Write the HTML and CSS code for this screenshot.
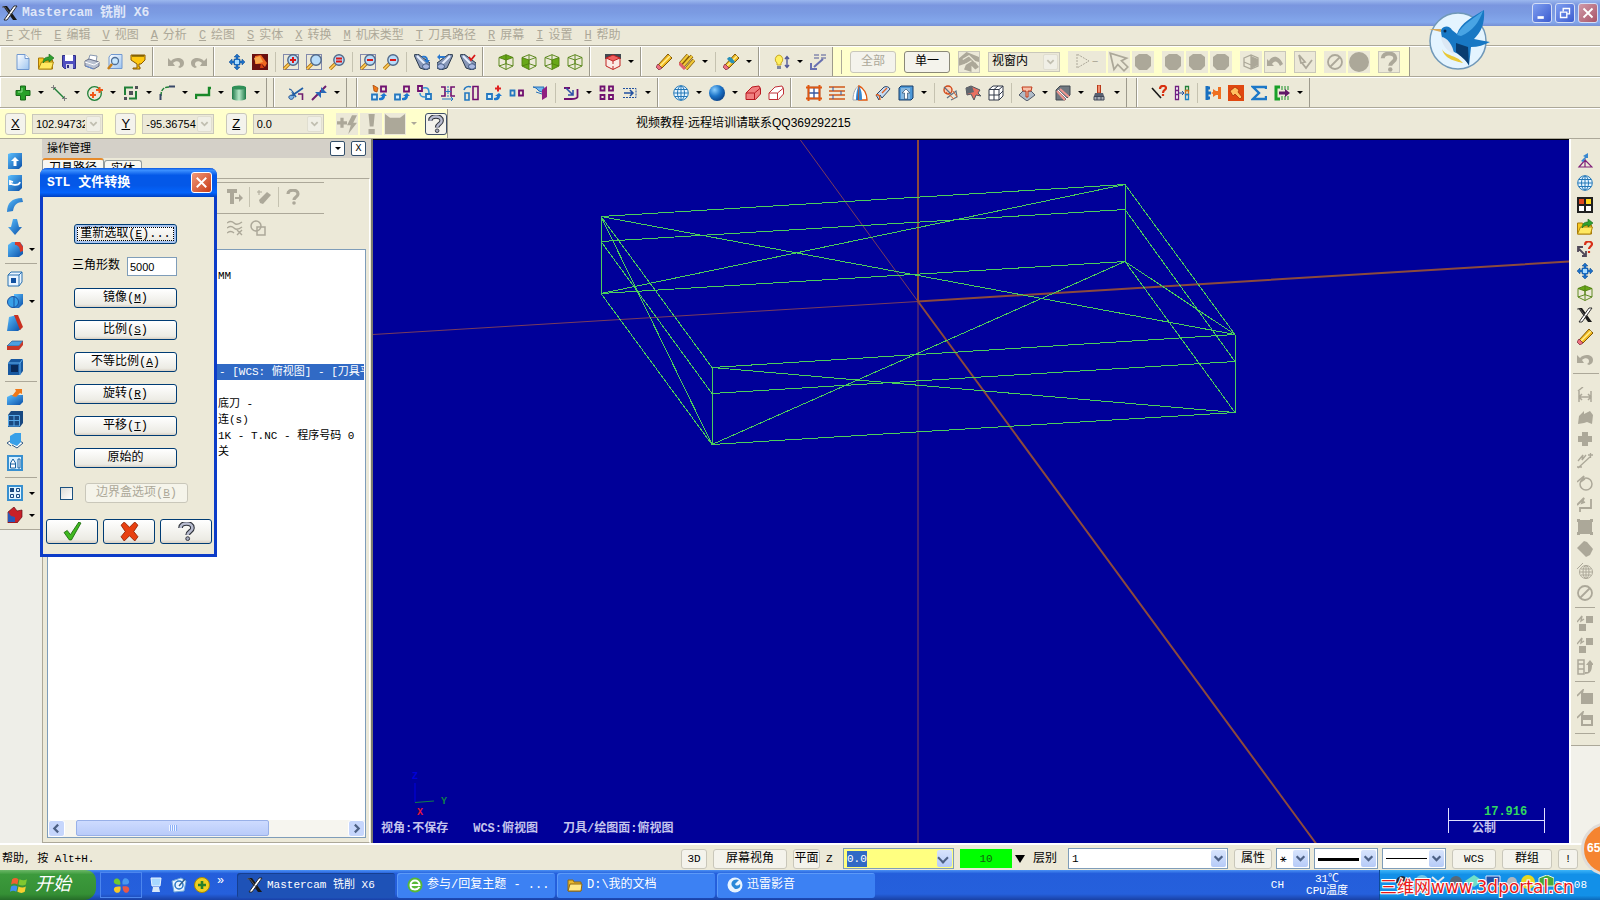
FILE: index.html
```html
<!DOCTYPE html>
<html lang="zh-CN">
<head>
  <meta charset="utf-8">
  <title>Mastercam 铣削 X6</title>
  <link rel="stylesheet" href="styles.css">
</head>
<body>

<!-- icon sheet -->
<svg class="sheet" width="0" height="0">
  <defs>
    <linearGradient id="gb" x1="0" y1="0" x2="1" y2="1"><stop offset="0" stop-color="#5cc0ff"/><stop offset="1" stop-color="#0a4fa8"/></linearGradient>
    <linearGradient id="gg" x1="0" y1="0" x2="1" y2="0"><stop offset="0" stop-color="#1e7a48"/><stop offset=".5" stop-color="#b6e8c8"/><stop offset="1" stop-color="#1e7a48"/></linearGradient>
    <linearGradient id="gp" x1="0" y1="0" x2="1" y2="1"><stop offset="0" stop-color="#ffffff"/><stop offset="1" stop-color="#9cc4f0"/></linearGradient>
    <radialGradient id="gs" cx=".35" cy=".3" r=".8"><stop offset="0" stop-color="#8cd0ff"/><stop offset=".5" stop-color="#1c74c8"/><stop offset="1" stop-color="#063a80"/></radialGradient>
  </defs>
  <symbol id="new" viewBox="0 0 16 16"><path d="M2 .5h8l4 4v11H2z" fill="url(#gp)" stroke="#7098d0"/><path d="M10 .5v4h4" fill="#fff" stroke="#7098d0"/></symbol>
  <symbol id="open" viewBox="0 0 16 16"><path d="M.5 15V4h5l1 2h8v9z" fill="#f8c820" stroke="#a87808"/><path d="M.5 15l3-7h12l-2 7z" fill="#ffe860" stroke="#b08810"/><path d="M5 9c0-4 2-6 6-6V0l5 4-5 4V6C8 6 7 7 5 9z" fill="#30a030" stroke="#186818" stroke-width=".6"/></symbol>
  <symbol id="save" viewBox="0 0 16 16"><path d="M1.500 1.500h13v13h-11l-2-2z" fill="#5050c0" stroke="#303088"/><path d="M4 1h8v6H4z" fill="#fff"/><path d="M5 10h7v5H5z" fill="#d8d8e8"/><path d="M6 11h2v3H6z" fill="#303080"/></symbol>
  <symbol id="print" viewBox="0 0 16 16"><path d="M4 7l2-6 7 1-1 6z" fill="#fff" stroke="#8898b0"/><path d="M1 7l4-2 10 3v4l-5 3-9-3z" fill="#b8c0d0" stroke="#68708a"/><path d="M1 8l9 3 5-3" fill="none" stroke="#fff"/><path d="M2 12l7 3" stroke="#6890d8"/></symbol>
  <symbol id="preview" viewBox="0 0 16 16"><path d="M4 .5h11v14H2V3z" fill="url(#gp)" stroke="#7098d0"/><circle cx="8" cy="7" r="3.500" fill="#c8e8ff" stroke="#507098" stroke-width="1.300"/><path d="M5 10l-4 5" stroke="#c88018" stroke-width="2.500"/></symbol>
  <symbol id="cup" viewBox="0 0 16 16"><path d="M1 1h14v5l-4 4H9v3h1v2H3v-1h4v-4L1 6z" fill="#ffc810" stroke="#8a5a00"/><path d="M3 1v2m2-2v2m2-2v2m2-2v2m2-2v2m2-2v2" stroke="#403000"/></symbol>
  <symbol id="undo" viewBox="0 0 16 16"><path d="M0 4v8h7L5 9c3-3 7-2 7 1 0 2-1 2-2 3l2 1c3-1 4-3 4-5 0-5-8-7-13-2z" fill="#aca899"/></symbol>
  <symbol id="redo" viewBox="0 0 16 16"><path d="M16 4v8H9l2-3C8 6 4 7 4 10c0 2 1 2 2 3l-2 1C1 13 0 11 0 9c0-5 8-7 13-2z" fill="#aca899"/></symbol>
  <symbol id="move" viewBox="0 0 16 16"><path d="M8 0l3 3H9v2h2v2h2V5l3 3-3 3V9h-2v2H9v2h2l-3 3-3-3h2v-2H5V9H3v2L0 8l3-3v2h2V5h2V3H5z" fill="#1c70c8" stroke="#104c90" stroke-width=".5"/><path d="M6 6h4v4H6z" fill="#a8dcff"/></symbol>
  <symbol id="paint" viewBox="0 0 16 16"><path d="M0 0h16v16H0z" fill="#6a1010"/><path d="M3 2l6-1 6 8-2 4-3-3-7 0z" fill="#f06820"/><path d="M2 4l6-2 3 6-7 2z" fill="#f8a850"/><path d="M9 9l3 5H8z" fill="#d84010"/></symbol>
  <symbol id="lens" viewBox="0 0 16 16"><path d="M1 15l5-5" stroke="#b87810" stroke-width="3.400"/><path d="M1 15l5-5" stroke="#ffd060" stroke-width="1.600"/><circle cx="10" cy="6" r="5.200" fill="#b8dcfa" stroke="#506888" stroke-width="1.400"/></symbol>
  <symbol id="zoomin" viewBox="0 0 16 16"><path d="M.5.5h15v15H.5z" fill="none" stroke="#182880" stroke-dasharray="1 1"/><use href="#lens"/><path d="M7 6h6M10 3v6" stroke="#d81818" stroke-width="2"/></symbol>
  <symbol id="zoomwin" viewBox="0 0 16 16"><path d="M.5.5h15v15H.5z" fill="none" stroke="#182880" stroke-dasharray="1 1"/><use href="#lens"/></symbol>
  <symbol id="zoomeq" viewBox="0 0 16 16"><use href="#lens"/><path d="M7 4.500h6M7 7.500h6" stroke="#d81818" stroke-width="1.800"/></symbol>
  <symbol id="zoomoutw" viewBox="0 0 16 16"><path d="M.5.5h15v15H.5z" fill="none" stroke="#182880" stroke-dasharray="1 1"/><use href="#lens"/><path d="M7 6h6" stroke="#d81818" stroke-width="2"/></symbol>
  <symbol id="zoomout" viewBox="0 0 16 16"><use href="#lens"/><path d="M7 6h6" stroke="#d81818" stroke-width="2"/></symbol>
  <symbol id="spy" viewBox="0 0 16 16"><path d="M0 1l4-1 12 9v5l-4 2-6-2z" fill="#8898b8" stroke="#28384c"/><path d="M3 2l9 9" stroke="#e8f0ff" stroke-width="2"/><ellipse cx="12" cy="12.500" rx="3.500" ry="2.800" fill="#a8b8e0" stroke="#405880"/></symbol>
  <symbol id="spy1" viewBox="0 0 16 16"><use href="#spy"/><path d="M8 2c4-1 6 1 6 4l2 0-3 3-3-3h2c0-2-2-3-4-2z" fill="#2878d0"/></symbol>
  <symbol id="spy2" viewBox="0 0 16 16"><use href="#spy" transform="matrix(-1 0 0 1 16 0)"/><path d="M0 3l3-3v2h5v2H3v2z" fill="#2878d0"/></symbol>
  <symbol id="spy3" viewBox="0 0 16 16"><use href="#spy"/><path d="M9 3l2 3 4-5" fill="none" stroke="#d81818" stroke-width="1.800"/></symbol>
  <symbol id="cube" viewBox="0 0 16 16"><path d="M1 3.500L8 .7l7 2.800v8.500l-7 3.500-7-3.500z M1 3.500l7 2.500 7-2.500M8 6v9.500M8 .7v9L1 12m7-2.300L15 12" fill="none" stroke="#508010" stroke-width=".9"/></symbol>
  <symbol id="cubet" viewBox="0 0 16 16"><path d="M1 3.500L8 .7l7 2.800L8 6z" fill="#68a818"/><use href="#cube"/></symbol>
  <symbol id="cubef" viewBox="0 0 16 16"><path d="M1 3.500L8 6v9.500L1 12z" fill="#68a818"/><use href="#cube"/></symbol>
  <symbol id="cuber" viewBox="0 0 16 16"><path d="M15 3.500L8 6v9.500l7-3.500z" fill="#68a818"/><use href="#cube"/></symbol>
  <symbol id="redbox" viewBox="0 0 16 16"><path d="M0 0h16v5H0z" fill="#404850"/><path d="M1 4l7-3 7 3-7 3z" fill="#f06060"/><path d="M1 4v8l7 3.500 7-3.500V4L8 7z" fill="#fbeae4"/><path d="M1 4l7-3 7 3v8l-7 3.500L1 12zM1 4l7 3 7-3M8 7v3m0 2v3" fill="none" stroke="#c02020"/></symbol>
  <symbol id="pencil" viewBox="0 0 16 16"><path d="M2 11L12 0l4 4L6 14z" fill="#f0b820" stroke="#805808"/><path d="M4 12L14 2" stroke="#fff090" stroke-width="1.600"/><path d="M2 10l4 4-3 2-3-3z" fill="#f07080" stroke="#803040" stroke-width=".8"/></symbol>
  <symbol id="pencils" viewBox="0 0 16 16"><path d="M1 10l8-9M4 12l9-10M7 15l8-9" stroke="#805808" stroke-width="3.600"/><path d="M1 10l8-9M4 12l9-10M7 15l8-9" stroke="#f0c838" stroke-width="2.200"/><path d="M0 9l3 3M3 12l3 3" stroke="#e06070" stroke-width="3"/></symbol>
  <symbol id="pencilb" viewBox="0 0 16 16"><use href="#pencil"/><path d="M4 5c3-4 5-1 8 3-3 3-4 1-8-3z" fill="#2890b8"/></symbol>
  <symbol id="bulb" viewBox="0 0 16 16"><path d="M5 1a4.500 4.500 0 0 1 2 8v2H3V9a4.500 4.500 0 0 1 2-8z" fill="#fff060" stroke="#c8a820"/><path d="M3 12h4v3H3z" fill="#8088a0"/><path d="M13 3v10m-2-8l2-2.500L15 5m-4 6l2 2.500 2-2.500" fill="none" stroke="#505898" stroke-width="1.400"/></symbol>
  <symbol id="dimline" viewBox="0 0 16 16"><path d="M4 1h5m2 0h5M4 4h5m2 0h5" stroke="#505898"/><path d="M13 5L4 13M1 9v6h6" fill="none" stroke="#6870b0" stroke-width="2"/></symbol>

  <symbol id="plus" viewBox="0 0 16 16"><path d="M5.500 1h5v4.500H15v5h-4.500V15h-5v-4.500H1v-5h4.500z" fill="#28a028" stroke="#186818"/><path d="M7 3v4H3" fill="none" stroke="#90e090"/></symbol>
  <symbol id="line" viewBox="0 0 16 16"><path d="M3 3l10 10" stroke="#208038" stroke-width="1.400"/><path d="M0 2.500h5M2.500 0v5M11 13.500h5M13.500 11v5" stroke="#808080"/></symbol>
  <symbol id="circ" viewBox="0 0 16 16"><circle cx="7.500" cy="8.500" r="6.800" fill="none" stroke="#208038" stroke-width="1.300"/><path d="M3 10h6M6 7v6M9 5h7M12.500 2v6" stroke="#f05818" stroke-width="2"/></symbol>
  <symbol id="rect" viewBox="0 0 16 16"><path d="M2 2.500h11v11h-11z" fill="none" stroke="#208038" stroke-width="2"/><path d="M10 0h6v6h-6zM0 10h6v6H0z" fill="#ece9d8"/><path d="M12 1h3v3h-3zM1 12h3v3H1zM6 6h4v4H6z" fill="#505058"/></symbol>
  <symbol id="fillet" viewBox="0 0 16 16"><path d="M2 11c0-6 2-9 8-9" fill="none" stroke="#208038" stroke-width="1.500" stroke-dasharray="4 1"/><path d="M10 1.500h6M1.500 9v6" stroke="#384868" stroke-width="2"/></symbol>
  <symbol id="spline" viewBox="0 0 16 16"><path d="M1 14V10h13V3h2" fill="none" stroke="#188828" stroke-width="2.400"/></symbol>
  <symbol id="cyl" viewBox="0 0 16 16"><path d="M1 2v12c3 2 11 2 14 0V2z" fill="url(#gg)"/><ellipse cx="8" cy="2.500" rx="7" ry="2" fill="#309058"/></symbol>
  <symbol id="trim" viewBox="0 0 16 16"><path d="M2 12L15 3M4 7l4 5" stroke="#2060a8" stroke-width="1.800"/><path d="M1 4c3 0 4 3 5 5M6 12c-1 3-4 3-5 1s2-4 5-2" fill="#7cb4e8" stroke="#205090"/><path d="M10 9h4.500v6" fill="none" stroke="#702070" stroke-width="1.600"/></symbol>
  <symbol id="brk" viewBox="0 0 16 16"><path d="M1 15L7 9M9 7l6-6" stroke="#702070" stroke-width="2"/><path d="M4 7h6v6zM10 2v6h6" fill="#2868b8"/></symbol>
  <symbol id="xf1" viewBox="0 0 16 16"><path d="M1 9.500h5v5H1z" fill="#d8f0ff" stroke="#2478c0" stroke-width="1.800"/><path d="M10 1.500h5v5h-5z" fill="none" stroke="#701070" stroke-width="1.800"/><path d="M8 15c4 1 6-1 6-4l2 0-3-3-4 3h2c0 1-1 2-3 2z" fill="#1c78d0"/><path d="M2 0l5 3-1 4-3-1z" fill="#f07818" stroke="#a04000" stroke-width=".7"/></symbol>
  <symbol id="xf2" viewBox="0 0 16 16"><path d="M1 9.500h5v5H1z" fill="#d8f0ff" stroke="#2478c0" stroke-width="1.800"/><path d="M10 1.500h5v5h-5z" fill="none" stroke="#701070" stroke-width="1.800"/><path d="M8 15c4 1 6-1 6-4l2 0-3-3-4 3h2c0 1-1 2-3 2z" fill="#1c78d0"/></symbol>
  <symbol id="xf3" viewBox="0 0 16 16"><path d="M1 1h4v5H1z" fill="none" stroke="#701070" stroke-width="1.800"/><path d="M9 9h5v5H9z" fill="#d8f0ff" stroke="#2478c0" stroke-width="1.800"/><path d="M6 3c5-1 6 1 6 5m-9 0c0 3 1 4 5 4" fill="none" stroke="#3898d8" stroke-width="1.600"/></symbol>
  <symbol id="xf4" viewBox="0 0 16 16"><path d="M1 2h4v9H1M15 2h-4v9h4" fill="none" stroke="#701070" stroke-width="1.600"/><path d="M8 1v12" stroke="#2478c0" stroke-dasharray="2 1"/><path d="M2 14h11m-2-2l2 2-2 2M5 6.500h6" fill="none" stroke="#2478c0"/></symbol>
  <symbol id="xf5" viewBox="0 0 16 16"><path d="M10 1.500h5v13h-5z" fill="none" stroke="#701070" stroke-width="1.600"/><path d="M2 8h4v7H2zM1 5c1-3 4-4 7-3" fill="none" stroke="#2478c0" stroke-width="1.600"/></symbol>
  <symbol id="xf6" viewBox="0 0 16 16"><path d="M1 9h5v5H1z" fill="#d8f0ff" stroke="#2478c0" stroke-width="1.800"/><path d="M8 15c4 1 6-1 6-4l2 0-3-3-4 3h2c0 1-1 2-3 2z" fill="#1c78d0"/><path d="M9 3.500h6M12 .5v6" stroke="#e02020" stroke-width="2"/></symbol>
  <symbol id="xf7" viewBox="0 0 16 16"><path d="M1.500 5.500h4v5h-4z" fill="none" stroke="#2478c0" stroke-width="1.800"/><path d="M10 5.500h4v5h-4z" fill="none" stroke="#701070" stroke-width="1.800"/></symbol>
  <symbol id="xf8" viewBox="0 0 16 16"><path d="M1 2h11l-2 5-3-1-3-3z" fill="#70b8f0" stroke="#2870b8"/><path d="M4 7l6 2" stroke="#2870b8"/><path d="M15 1v11l-5 3V5z" fill="#902080"/></symbol>
  <symbol id="xf9" viewBox="0 0 16 16"><path d="M1 3h6M14.500 4v8c-1 2-3 2-6 2H1" fill="none" stroke="#701070" stroke-width="1.800"/><path d="M3 3l7 7m0-5v5H5" fill="none" stroke="#3050a8" stroke-width="1.600"/></symbol>
  <symbol id="xf10" viewBox="0 0 16 16"><path d="M1.500 1.500h4v4h-4zM10 1.500h4v4h-4zM1.500 10h4v4h-4zM10 10h4v4h-4z" fill="none" stroke="#701070" stroke-width="1.800"/></symbol>
  <symbol id="xf11" viewBox="0 0 16 16"><path d="M1 3.500h13v9H1" fill="none" stroke="#2050a0" stroke-dasharray="2 1"/><path d="M2 8h9M8 5l3 3-3 3" fill="none" stroke="#2050a0" stroke-width="1.500"/></symbol>
  <symbol id="globe" viewBox="0 0 16 16"><circle cx="8" cy="8" r="7.300" fill="#e4f4ff" stroke="#2478b8"/><path d="M1 8h14M8 1v14M2 4.500h12M2 11.500h12" stroke="#2478b8"/><ellipse cx="8" cy="8" rx="3.500" ry="7" fill="none" stroke="#2478b8"/></symbol>
  <symbol id="ball" viewBox="0 0 16 16"><circle cx="8" cy="8" r="8" fill="url(#gs)"/></symbol>
  <symbol id="soap" viewBox="0 0 16 16"><path d="M1 8l6-6 7-1 1.500 3v5l-5 5.500H1z" fill="#f08080" stroke="#b81820"/><path d="M1 8h8.500l6-5M9.500 8v6.500" fill="none" stroke="#b81820"/></symbol>
  <symbol id="soapw" viewBox="0 0 16 16"><path d="M1 8l6-6 7-1 1.500 3v5l-5 5.500H1z" fill="#fff" stroke="#c03038"/><path d="M1 8h8.500l6-5M9.500 8v6.500" fill="none" stroke="#c03038"/></symbol>
  <symbol id="net" viewBox="0 0 16 16"><path d="M2.500 2.500h11v11h-11zM2.500 8h11M8 2.500v11" fill="#fff" stroke="#3858a0" stroke-width="1.400"/><path d="M2.500 0v16M13.500 0v16M0 2.500h16M0 13.500h16" stroke="#e05810" stroke-width="2"/></symbol>
  <symbol id="rows" viewBox="0 0 16 16"><path d="M0 2h16M0 6h16M0 10h16M0 14h16" stroke="#d05818" stroke-width="1.500"/><path d="M4 2v4m8 0v4M4 10v4" stroke="#3858a0"/></symbol>
  <symbol id="fin" viewBox="0 0 16 16"><path d="M1 15C1 7 4 2 7 1v14z" fill="#fff" stroke="#a0a8b0"/><path d="M7 1v14H4C4 8 5 3 7 1z" fill="url(#gb)"/><path d="M7 1c5 2 8 8 8 14H7z" fill="#fff" stroke="#e05810" stroke-width="1.400"/><path d="M7 1v14h3C10 8 9 4 7 1z" fill="#3888d0"/></symbol>
  <symbol id="sweep" viewBox="0 0 16 16"><path d="M1 10L9 2c3-1 5 0 6 2l-8 9-2-3-1 5z" fill="#c8dcf4" stroke="#304868"/><path d="M1 10c3-1 4 1 4 5M7 8l5-5" fill="none" stroke="#e06020" stroke-width="1.400"/></symbol>
  <symbol id="extr" viewBox="0 0 16 16"><path d="M1 3l2-2h12v12l-2 2H1z" fill="#4c98d8" stroke="#183c68"/><path d="M3 3h9v11H3z" fill="#88b8e0"/><path d="M8 4l4 4H9.500v6h-3V8H4z" fill="#fff" stroke="#305070" stroke-width=".7"/></symbol>
  <symbol id="flow1" viewBox="0 0 16 16"><circle cx="6" cy="5" r="4" fill="#fcd0b8" stroke="#d04818" stroke-width="1.400"/><path d="M2 2l7 7M5 13l9-7 1 6-6 3" fill="none" stroke="#607080" stroke-width="1.200"/><path d="M4 7l8 7M11 6l4 6" stroke="#e06030"/></symbol>
  <symbol id="flow2" viewBox="0 0 16 16"><path d="M1 3l5-2 9 4-2 3 3 3-5-1-2 5-3-6-4 1z" fill="#e87060" stroke="#505860"/><path d="M1 3l6-2 2 6-7 2z" fill="#606870"/></symbol>
  <symbol id="gbox" viewBox="0 0 16 16"><path d="M1 4.500L5 1h10v10l-4 4H1zM1 4.500h10V15M11 4.500L15 1M6 4.500V15M1 10h10M6 4.500L10 1M11 10l4-4" fill="#fff" stroke="#303848"/></symbol>
  <symbol id="pocket" viewBox="0 0 16 16"><path d="M0 10l4-4h8l4 4-8 6z" fill="#b0bcc8" stroke="#505868"/><path d="M3 2h10l-1 4H9v6H7V6H4z" fill="#f8c0a8" stroke="#c03818"/></symbol>
  <symbol id="stripe" viewBox="0 0 16 16"><path d="M1 5l4-4h10v9l-5 5H1z" fill="#707880" stroke="#404850"/><path d="M2 6l8 9M5 4l9 8" stroke="#f09890" stroke-width="2"/><path d="M3 5l9 9" stroke="#fff"/></symbol>
  <symbol id="drill" viewBox="0 0 16 16"><path d="M6.500 0h3v8h-3z" fill="#f09070" stroke="#b83818"/><path d="M4 8h8l1 3H3z" fill="#586070"/><path d="M3 11.500h10V15H3zM6 11v4m4-4v4" fill="#a8acb4" stroke="#404858"/></symbol>
  <symbol id="ask" viewBox="0 0 16 16"><path d="M1 3l9 10" stroke="#181818" stroke-width="1.600"/><path d="M9 4c0-4 6-4 6-1 0 2-3 2-3 5m0 1v2" fill="none" stroke="#d83010" stroke-width="2.200"/></symbol>
  <symbol id="chain" viewBox="0 0 16 16"><path d="M1.500 1.500h3v4h-3zm0 4h3v4h-3zm0 4h3v5h-3z" fill="#fff" stroke="#702080" stroke-width="1.300"/><path d="M11.500 1.500h3v4h-3z" fill="none" stroke="#208038" stroke-width="1.300"/><path d="M11.500 5.500h3v4h-3z" fill="none" stroke="#d07018" stroke-width="1.300"/><path d="M11.500 9.500h3v5h-3z" fill="none" stroke="#2080c0" stroke-width="1.300"/><path d="M5 8h5M8 6l2 2-2 2" stroke="#2050a0" fill="none"/></symbol>
  <symbol id="plug" viewBox="0 0 16 16"><path d="M2 1v14M2 3h3m-3 5h4m-4 5h3" stroke="#1870c0" stroke-width="3"/><path d="M16 2v12h-3v-4h-2l-3 2V9L6 8l2-1V4l3 2h2V2z" fill="#f07020"/></symbol>
  <symbol id="hammer" viewBox="0 0 16 16"><path d="M0 0h16v16H0z" fill="#e04810"/><path d="M2 6l5-4 4 3-1 2 4 5-2 2-5-5-2 2z" fill="#ffc060" stroke="#a02800" stroke-width=".7"/></symbol>
  <symbol id="sigma" viewBox="0 0 16 16"><path d="M15 4V2H2l6 6-6 6h13v-3" fill="none" stroke="#1c78c8" stroke-width="2.400"/></symbol>
  <symbol id="post" viewBox="0 0 16 16"><path d="M6 2H2v12h4" fill="none" stroke="#18a028" stroke-width="3"/><path d="M8 1v4m3-4v4m3-4v4M8 11v4m3-4v4m3-4v4" stroke="#189028"/><path d="M5 6.500h6V4l5 4-5 4V9.500H5z" fill="#601868"/></symbol>

  <symbol id="gflash" viewBox="0 0 16 16"><path d="M0 7h8M4 3v8" stroke="#aca899" stroke-width="2.600"/><path d="M12 1l4 0-3 6h3l-7 9 2-7H8z" fill="#aca899"/></symbol>
  <symbol id="gbang" viewBox="0 0 16 16"><path d="M6 0h5l-1 10H7zM6 12h5v4H6z" fill="#aca899"/></symbol>
  <symbol id="gcat" viewBox="0 0 16 16"><path d="M0 0l4 3h8l4-3v16H0z" fill="#aca899"/></symbol>
  <symbol id="help" viewBox="0 0 16 16"><path d="M3 5c0-5 10-5 10 0 0 3-4 3-4 6" fill="none" stroke="#30343c" stroke-width="4"/><path d="M3 5c0-5 10-5 10 0 0 3-4 3-4 6" fill="none" stroke="#b8bcd0" stroke-width="2.200"/><circle cx="9" cy="14" r="1.600" fill="#a8acc0" stroke="#30343c" stroke-width=".8"/></symbol>
  <symbol id="ghelp" viewBox="0 0 16 16"><path d="M3 5c0-5 10-5 10 0 0 3-4 3-4 6" fill="none" stroke="#aca899" stroke-width="3.200"/><circle cx="9" cy="14" r="1.800" fill="#aca899"/></symbol>
  <symbol id="gswirl" viewBox="0 0 16 16"><path d="M0 5l6-5 10 4v4l-4-1 4 5-3 2-3-3v5l-6-2 2-5-6 2z" fill="#aca899"/><path d="M3 6l5-3 5 5M5 10l5-3" fill="none" stroke="#ece9d8"/></symbol>
  <symbol id="glasso" viewBox="0 0 16 16"><path d="M2 0v14l12-7z" fill="none" stroke="#aca899" stroke-dasharray="2 1"/></symbol>
  <symbol id="garrow" viewBox="0 0 16 16"><path d="M1 1l3 13 3-4 5 5 3-3-5-5 4-2z" fill="#ece9d8" stroke="#aca899" stroke-width="1.400"/></symbol>
  <symbol id="gblob" viewBox="0 0 16 16"><path d="M4 0h8l4 3v9l-4 4H4l-4-4V3z" fill="#aca899"/></symbol>
  <symbol id="gcube" viewBox="0 0 16 16"><path d="M1 4l7-3 7 3v8l-7 3-7-3zM8 1v14M1 8l7 3" fill="none" stroke="#aca899" stroke-width="1.300"/><path d="M8 2l7 3v6l-7 4z" fill="#aca899"/></symbol>
  <symbol id="gback" viewBox="0 0 16 16"><path d="M0 12V5l2 2c3-6 10-6 14 3l-3 2C10 6 7 7 5 10l2 2z" fill="#aca899"/></symbol>
  <symbol id="gcheck" viewBox="0 0 16 16"><path d="M2 1l2 8 4-1zM5 9l4 5 6-8" fill="none" stroke="#aca899" stroke-width="1.800"/></symbol>
  <symbol id="gno" viewBox="0 0 16 16"><circle cx="8" cy="8" r="7" fill="none" stroke="#aca899" stroke-width="1.800"/><path d="M3 13L13 3" stroke="#aca899" stroke-width="1.800"/></symbol>
  <symbol id="gdisc" viewBox="0 0 16 16"><circle cx="8" cy="8" r="8" fill="#aca899"/></symbol>

  <symbol id="s1" viewBox="0 0 16 16"><path d="M1 1l3-1h11v13l-3 3H1z" fill="url(#gb)"/><path d="M8 4l4 4H9.500v5h-3V8H4z" fill="#fff"/></symbol>
  <symbol id="s2" viewBox="0 0 16 16"><path d="M1 1l3-1h11v13l-3 3H1z" fill="url(#gb)"/><path d="M3 6c0 5 9 5 10 1M3 10l0-4 3 1" fill="none" stroke="#fff" stroke-width="1.800"/></symbol>
  <symbol id="s3" viewBox="0 0 16 16"><path d="M0 15C0 6 5 1 15 1l1 4C10 5 7 8 6 14z" fill="url(#gb)"/></symbol>
  <symbol id="s4" viewBox="0 0 16 16"><path d="M6 0h4l2 8h3l-7 8-7-8h3z" fill="url(#gb)"/></symbol>
  <symbol id="s5" viewBox="0 0 16 16"><path d="M1 4l4-3h8l3 4v8l-4 3H1z" fill="url(#gb)"/><path d="M8 1h5l3 5v4l-3 1c0-5-2-7-5-7z" fill="#d83828"/></symbol>
  <symbol id="s6" viewBox="0 0 16 16"><path d="M1 4l3-3h11v10l-3 4H1zM1 4h11v11M12 4l3-3" fill="#e8f4ff" stroke="#2870b0"/><path d="M4 7h5v5H4z" fill="#1050a0"/></symbol>
  <symbol id="s7" viewBox="0 0 16 16"><path d="M7 1h9v10l-4 4H7z" fill="url(#gb)"/><circle cx="6" cy="9" r="5.500" fill="#38a0e8" stroke="#1850a0"/><path d="M7 4v11" stroke="#1850a0"/></symbol>
  <symbol id="s8" viewBox="0 0 16 16"><path d="M2 2l8-2 4 14-3 2H0z" fill="url(#gb)"/><path d="M7 0h4l5 12-3 3z" fill="#c83020"/></symbol>
  <symbol id="s9" viewBox="0 0 16 16"><path d="M0 9l5-5h11l-4 5z" fill="#4ca0e0" stroke="#204878" stroke-width=".6"/><path d="M0 9h12l4-5v4l-4 5H0z" fill="#c83828"/></symbol>
  <symbol id="s10" viewBox="0 0 16 16"><path d="M1 4l3-4h12v12l-3 4H1z" fill="#1858a0"/><path d="M4 6h7v7H4z" fill="#082858"/><path d="M1 4h12v12M13 4l3-4" fill="none" stroke="#60b0f0"/></symbol>
  <symbol id="s11" viewBox="0 0 16 16"><path d="M0 8l4-2h12v7l-3 3H0z" fill="url(#gb)"/><path d="M5 7l4-5-1-2 7 0v5l-2-1-4 4z" fill="#f07818"/></symbol>
  <symbol id="s12" viewBox="0 0 16 16"><path d="M1 4l3-4h12v12l-3 4H1z" fill="#184880"/><path d="M1.500 4.500h11V15h-11zM7 4.500V15M1 9.500h11.500" fill="none" stroke="#58a8e8"/></symbol>
  <symbol id="s13" viewBox="0 0 16 16"><path d="M13 8l3 2-6 5-5-3M3 8l-3 2 4 3" fill="#fff" stroke="#305880"/><path d="M3 3l5-3h6v9l-4 4-7-3z" fill="#38a0e8"/></symbol>
  <symbol id="s14" viewBox="0 0 16 16"><path d="M0 0h16v16H0z" fill="#3890d0"/><path d="M2 2h12v12H2z" fill="#d8f0ff"/><path d="M3.500 8L6 4l2.500 4v5h-5zM11 4h2v9h-2zM3 9h6" fill="#fff" stroke="#1860a0"/></symbol>
  <symbol id="s15" viewBox="0 0 16 16"><path d="M0 0h16v16H0z" fill="#3890d0"/><path d="M2 2h12v12H2z" fill="#e0f4ff"/><path d="M3 3h4v4H3z" fill="#184880"/><path d="M9.500 3.500h3v3h-3zm-6 6h3v3h-3zm6 0h3v3h-3z" fill="none" stroke="#184880"/></symbol>
  <symbol id="s16" viewBox="0 0 16 16"><path d="M1 5l6-5 3 4 5-1v7l-5 6H1z" fill="#c82028" stroke="#601018" stroke-width=".7"/><path d="M1 5l3 4 4 1v5H1z" fill="#2858b8"/></symbol>

  <symbol id="r1" viewBox="0 0 16 16"><path d="M2 14l6-7v7zM8 7l7 7H8" fill="none" stroke="#802078" stroke-width="1.200"/><path d="M4 8l4-4-2-1 5-3v5L9 5 6 9z" fill="#3888d0"/></symbol>
  <symbol id="r3" viewBox="0 0 16 16"><path d="M0 0h16v16H0z" fill="#202020"/><path d="M2 2h5v5H2z" fill="#e04820"/><path d="M9 2h5v5H9z" fill="#ffd820"/><path d="M2 9h5v5H2zM9 9h5v5H9z" fill="#fff"/></symbol>
  <symbol id="r5" viewBox="0 0 16 16"><path d="M1 7l8 8M1 11V6h5M9 10v5H5" fill="none" stroke="#504858" stroke-width="1.800"/><path d="M8 4c0-5 7-4 7-1 0 2-3 3-3 5m0 2v2" fill="none" stroke="#d83018" stroke-width="2.200"/></symbol>
  <symbol id="logo" viewBox="0 0 16 16"><path d="M1 1h4l10 14h-4z" fill="#181818"/><path d="M2 15L12 1l3 0-5 7-5 7z" fill="#fff" stroke="#202020" stroke-width=".9"/><path d="M0 2h3l6 8" fill="none" stroke="#585858"/></symbol>
  <symbol id="gdim" viewBox="0 0 16 16"><path d="M2 4v11M14 4v11M3 10h10M5 7l-3 3 3 3m6-6l3 3-3 3M1 4l5-4" fill="none" stroke="#aca899" stroke-width="1.500"/></symbol>
  <symbol id="gpaw" viewBox="0 0 16 16"><path d="M2 7l5-5v3l6-3 3 4-1 9-5-2-3 1-6 1z" fill="#aca899"/></symbol>
  <symbol id="gplus" viewBox="0 0 16 16"><path d="M5 1h6v4h4v6h-4v4H5v-4H1V5h4z" fill="#aca899"/></symbol>
  <symbol id="gline" viewBox="0 0 16 16"><path d="M1 15L14 3M1 8l5-6-1 5 4-5M11 2h5M13.500 0v5M0 14h5" fill="none" stroke="#aca899" stroke-width="1.300"/></symbol>
  <symbol id="gcirc" viewBox="0 0 16 16"><circle cx="9" cy="9" r="6" fill="none" stroke="#aca899" stroke-width="1.500"/><path d="M0 7l7-6-2 5 3-2" fill="none" stroke="#aca899" stroke-width="1.500"/></symbol>
  <symbol id="gstep" viewBox="0 0 16 16"><path d="M3 15v-4h11V2M0 8l7-7-2 5 3-1" fill="none" stroke="#aca899" stroke-width="1.800"/></symbol>
  <symbol id="gsq" viewBox="0 0 16 16"><path d="M0 0h3v1h10V0h3v3h-1v10h1v3h-3v-1H3v1H0v-3h1V3H0z" fill="#aca899"/></symbol>
  <symbol id="ghex" viewBox="0 0 16 16"><path d="M0 7l7-7 3 1 6 7-3 6-4 2-6-6z" fill="#aca899"/></symbol>
  <symbol id="gglobe" viewBox="0 0 16 16"><circle cx="9" cy="9" r="6.500" fill="none" stroke="#aca899"/><path d="M3 9h12M9 3v12M4 6h10M4 12h10M0 6l6-6" stroke="#aca899"/><ellipse cx="9" cy="9" rx="3" ry="6.500" fill="none" stroke="#aca899"/></symbol>
  <symbol id="gpair" viewBox="0 0 16 16"><path d="M9 1h7v7H9zM2 9h7v7H2z" fill="#aca899"/><path d="M0 7l5-6-1 5 3-2" fill="none" stroke="#aca899" stroke-width="1.400"/></symbol>
  <symbol id="glist" viewBox="0 0 16 16"><path d="M1 1h6v14H1zM1 5h6M1 10h6" fill="none" stroke="#aca899" stroke-width="1.500"/><path d="M8 13h3V6H9l4-5 4 5h-2c0 6-2 9-7 9z" fill="#aca899"/></symbol>
  <symbol id="gtile" viewBox="0 0 16 16"><path d="M4 4h12v11H4z" fill="#aca899"/><path d="M0 7l6-6-1 4" fill="none" stroke="#aca899" stroke-width="1.600"/></symbol>
  <symbol id="gtile2" viewBox="0 0 16 16"><path d="M4 4h12v11H4z" fill="#aca899"/><path d="M6 9h8v4H6z" fill="#ece9d8"/><path d="M0 7l6-6-1 4" fill="none" stroke="#aca899" stroke-width="1.600"/></symbol>
  <symbol id="gtool" viewBox="0 0 16 16"><path d="M0 0h10v4H7v11H3V4H0zM8 8h4V5l4 4-4 4v-3H8z" fill="#aca899"/></symbol>
  <symbol id="gmag" viewBox="0 0 16 16"><path d="M3 11L11 3l4 3-8 9-3-1z" fill="#aca899"/><path d="M3 1v5M1 3h5" stroke="#aca899"/></symbol>
  <symbol id="gwave" viewBox="0 0 16 16"><path d="M0 3q4-3 7 0t8-1M0 8q4-3 7 0t8-1M0 13q4-3 7 0M10 10l5 5m0-5l-5 5" fill="none" stroke="#aca899" stroke-width="1.400"/></symbol>
  <symbol id="gshape" viewBox="0 0 16 16"><circle cx="6" cy="6" r="5" fill="none" stroke="#aca899" stroke-width="1.500"/><path d="M7 7h8v8H7z" fill="none" stroke="#aca899" stroke-width="1.500"/></symbol>
  <symbol id="chev" viewBox="0 0 10 10"><path d="M1.500 3L5 6.500 8.500 3" fill="none" stroke="currentColor" stroke-width="2"/></symbol>
</svg>

<header class="titlebar">
  <svg class="icon"><use href="#logo"/></svg>
  <h1>Mastercam 铣削 X6</h1>
  <div class="winbtns">
    <button><svg viewBox="0 0 20 20"><path d="M5 15h7" stroke="#fff" stroke-width="3"/></svg></button>
    <button><svg viewBox="0 0 20 20"><path d="M5 9h7v6H5zM8 8V5h7v6h-3" fill="none" stroke="#fff" stroke-width="1.500"/></svg></button>
    <button class="close"><svg viewBox="0 0 20 20"><path d="M5 5l10 10M15 5L5 15" stroke="#fff" stroke-width="2"/></svg></button>
  </div>
</header>

<nav class="menu">
  <a href="#"><u>F</u>文件</a><a href="#"><u>E</u>编辑</a><a href="#"><u>V</u>视图</a><a href="#"><u>A</u>分析</a><a href="#"><u>C</u>绘图</a><a href="#"><u>S</u>实体</a><a href="#"><u>X</u>转换</a><a href="#"><u>M</u>机床类型</a><a href="#"><u>T</u>刀具路径</a><a href="#"><u>R</u>屏幕</a><a href="#"><u>I</u>设置</a><a href="#"><u>H</u>帮助</a>
</nav>

<div class="row">
  <div class="bar">
    <button class="tool"><svg><use href="#new"/></svg></button>
    <button class="tool"><svg><use href="#open"/></svg></button>
    <button class="tool"><svg><use href="#save"/></svg></button>
    <button class="tool"><svg><use href="#print"/></svg></button>
    <button class="tool"><svg><use href="#preview"/></svg></button>
    <button class="tool"><svg><use href="#cup"/></svg></button>
  </div>
  <div class="bar">
    <button class="tool"><svg><use href="#undo"/></svg></button>
    <button class="tool"><svg><use href="#redo"/></svg></button>
  </div>
  <div class="bar">
    <button class="tool"><svg><use href="#move"/></svg></button>
    <button class="tool"><svg><use href="#paint"/></svg></button>
    <i class="sep"></i>
    <button class="tool"><svg><use href="#zoomin"/></svg></button>
    <button class="tool"><svg><use href="#zoomwin"/></svg></button>
    <button class="tool"><svg><use href="#zoomeq"/></svg></button>
    <i class="sep"></i>
    <button class="tool"><svg><use href="#zoomoutw"/></svg></button>
    <button class="tool"><svg><use href="#zoomout"/></svg></button>
    <i class="sep"></i>
    <button class="tool"><svg><use href="#spy1"/></svg></button>
    <button class="tool"><svg><use href="#spy2"/></svg></button>
    <button class="tool"><svg><use href="#spy3"/></svg></button>
  </div>
  <div class="bar">
    <button class="tool"><svg><use href="#cubet"/></svg></button>
    <button class="tool"><svg><use href="#cubef"/></svg></button>
    <button class="tool"><svg><use href="#cuber"/></svg></button>
    <button class="tool"><svg><use href="#cube"/></svg></button>
  </div>
  <div class="bar">
    <button class="tool"><svg><use href="#redbox"/></svg></button><button class="drop"></button>
  </div>
  <div class="bar">
    <button class="tool"><svg><use href="#pencil"/></svg></button>
    <button class="tool"><svg><use href="#pencils"/></svg></button><button class="drop"></button>
    <i class="sep"></i>
    <button class="tool"><svg><use href="#pencilb"/></svg></button><button class="drop"></button>
  </div>
  <div class="bar">
    <button class="tool"><svg><use href="#bulb"/></svg></button><button class="drop"></button>
    <button class="tool"><svg><use href="#dimline"/></svg></button>
  </div>
  <div class="select-bar">
    <i class="grip"></i>
    <button class="xp wide" disabled>全部</button>
    <button class="xp wide on">单一</button>
    <button class="flat edge"><svg class="big"><use href="#gswirl"/></svg></button>
    <span class="combo mode"><select aria-label="窗选"><option>视窗内</option></select><svg class="chev dim"><use href="#chev"/></svg></span>
    <div class="set"><button class="flat lasso"><svg><use href="#glasso"/></svg>–</button><button class="flat"><svg class="big"><use href="#garrow"/></svg></button><button class="flat"><svg><use href="#gblob"/></svg></button></div>
    <div class="set"><button class="flat"><svg><use href="#gblob"/></svg></button><button class="flat"><svg><use href="#gblob"/></svg></button><button class="flat"><svg><use href="#gblob"/></svg></button></div>
    <div class="set"><button class="flat"><svg><use href="#gcube"/></svg></button><button class="flat edge"><svg><use href="#gback"/></svg></button></div>
    <button class="flat edge"><svg><use href="#gcheck"/></svg></button>
    <div class="set"><button class="flat"><svg><use href="#gno"/></svg></button><button class="flat"><svg class="big"><use href="#gdisc"/></svg></button></div>
    <button class="flat edge"><svg class="big"><use href="#ghelp"/></svg></button>
  </div>
</div>

<div class="row">
  <div class="bar">
    <button class="tool"><svg><use href="#plus"/></svg></button><button class="drop"></button>
    <button class="tool"><svg><use href="#line"/></svg></button><button class="drop"></button>
    <button class="tool"><svg><use href="#circ"/></svg></button><button class="drop"></button>
    <button class="tool"><svg><use href="#rect"/></svg></button><button class="drop"></button>
    <button class="tool"><svg><use href="#fillet"/></svg></button><button class="drop"></button>
    <button class="tool"><svg><use href="#spline"/></svg></button><button class="drop"></button>
    <button class="tool"><svg><use href="#cyl"/></svg></button><button class="drop"></button>
  </div>
  <div class="bar apart">
    <button class="tool"><svg><use href="#trim"/></svg></button>
    <button class="tool"><svg><use href="#brk"/></svg></button><button class="drop"></button>
  </div>
  <div class="bar apart far">
    <button class="tool"><svg><use href="#xf1"/></svg></button>
    <button class="tool"><svg><use href="#xf2"/></svg></button>
    <button class="tool"><svg><use href="#xf3"/></svg></button>
    <button class="tool"><svg><use href="#xf4"/></svg></button>
    <button class="tool"><svg><use href="#xf5"/></svg></button>
    <button class="tool"><svg><use href="#xf6"/></svg></button>
    <button class="tool"><svg><use href="#xf7"/></svg></button>
    <button class="tool"><svg><use href="#xf8"/></svg></button>
    <i class="sep"></i>
    <button class="tool"><svg><use href="#xf9"/></svg></button><button class="drop"></button>
    <button class="tool"><svg><use href="#xf10"/></svg></button>
    <button class="tool"><svg><use href="#xf11"/></svg></button><button class="drop"></button>
  </div>
  <div class="bar">
    <button class="tool"><svg><use href="#globe"/></svg></button><button class="drop"></button>
    <button class="tool"><svg><use href="#ball"/></svg></button><button class="drop"></button>
    <button class="tool"><svg><use href="#soap"/></svg></button>
    <button class="tool"><svg><use href="#soapw"/></svg></button>
  </div>
  <div class="bar">
    <button class="tool"><svg><use href="#net"/></svg></button>
    <button class="tool"><svg><use href="#rows"/></svg></button>
    <button class="tool"><svg><use href="#fin"/></svg></button>
    <button class="tool"><svg><use href="#sweep"/></svg></button>
    <button class="tool"><svg><use href="#extr"/></svg></button><button class="drop"></button>
    <i class="sep"></i>
    <button class="tool"><svg><use href="#flow1"/></svg></button>
    <button class="tool"><svg><use href="#flow2"/></svg></button>
    <button class="tool"><svg><use href="#gbox"/></svg></button>
    <i class="sep"></i>
    <button class="tool"><svg><use href="#pocket"/></svg></button><button class="drop"></button>
    <button class="tool"><svg><use href="#stripe"/></svg></button><button class="drop"></button>
    <button class="tool"><svg><use href="#drill"/></svg></button><button class="drop"></button>
  </div>
  <div class="bar apart far">
    <button class="tool"><svg><use href="#ask"/></svg></button>
    <button class="tool"><svg><use href="#chain"/></svg></button>
    <i class="sep"></i>
    <button class="tool"><svg><use href="#plug"/></svg></button>
    <button class="tool"><svg><use href="#hammer"/></svg></button>
    <button class="tool"><svg><use href="#sigma"/></svg></button>
    <button class="tool"><svg><use href="#post"/></svg></button><button class="drop"></button>
  </div>
</div>

<div class="row coords">
  <div class="coord-bar">
    <button class="xp axis"><u>X</u></button>
    <span class="combo num"><input aria-label="X" value="102.94732"><svg class="chev dim"><use href="#chev"/></svg></span>
    <button class="xp axis"><u>Y</u></button>
    <span class="combo num"><input aria-label="Y" value="-95.36754"><svg class="chev dim"><use href="#chev"/></svg></span>
    <button class="xp axis"><u>Z</u></button>
    <span class="combo num"><input aria-label="Z" value="0.0"><svg class="chev dim"><use href="#chev"/></svg></span>
    <div class="set"><button class="flat"><svg class="big"><use href="#gflash"/></svg></button><button class="flat"><svg class="big"><use href="#gbang"/></svg></button><button class="flat"><svg class="big"><use href="#gcat"/></svg></button><button class="drop off"></button></div>
    <button class="xp qhelp"><svg><use href="#help"/></svg></button>
  </div>
  <p class="notice">视频教程·远程培训请联系QQ369292215</p>
</div>

<main class="work">
  <aside class="left">
    <div class="strip">
      <div><button class="tool"><svg><use href="#s1"/></svg></button></div>
      <div><button class="tool"><svg><use href="#s2"/></svg></button></div>
      <div><button class="tool"><svg><use href="#s3"/></svg></button></div>
      <div><button class="tool"><svg><use href="#s4"/></svg></button></div>
      <div><button class="tool"><svg><use href="#s5"/></svg></button><button class="drop"></button></div>
      <hr>
      <div><button class="tool"><svg><use href="#s6"/></svg></button></div>
      <div><button class="tool"><svg><use href="#s7"/></svg></button><button class="drop"></button></div>
      <div><button class="tool"><svg><use href="#s8"/></svg></button></div>
      <div><button class="tool"><svg><use href="#s9"/></svg></button></div>
      <div><button class="tool"><svg><use href="#s10"/></svg></button></div>
      <hr>
      <div><button class="tool"><svg><use href="#s11"/></svg></button></div>
      <div><button class="tool"><svg><use href="#s12"/></svg></button></div>
      <div><button class="tool"><svg><use href="#s13"/></svg></button></div>
      <div><button class="tool"><svg><use href="#s14"/></svg></button></div>
      <hr>
      <div><button class="tool"><svg><use href="#s15"/></svg></button><button class="drop"></button></div>
      <div><button class="tool"><svg><use href="#s16"/></svg></button><button class="drop"></button></div>
    </div>
  </aside>

  <section class="panel">
    <div class="panel-head"><h2>操作管理</h2><button class="mini"><b class="tri"></b></button><button class="mini">X</button></div>
    <div class="tabs"><button class="tab active">刀具路径</button><button class="tab">实体</button></div>
    <div class="page">
      <div class="ptools">
        <div class="pline"><button class="tool"><svg><use href="#gtool"/></svg></button><i class="sep"></i><button class="tool"><svg><use href="#gmag"/></svg></button><i class="sep"></i><button class="tool"><svg><use href="#ghelp"/></svg></button></div>
        <div class="pline last"><button class="tool"><svg><use href="#gwave"/></svg></button><button class="tool"><svg><use href="#gshape"/></svg></button></div>
      </div>
      <div class="tree">
        <ul>
          <li></li><li>MM</li><li></li><li></li><li></li><li></li><li></li>
          <li class="sel">- [WCS: 俯视图] - [刀具平</li>
          <li></li><li>底刀 -</li><li>连(s)</li><li>1K - T.NC - 程序号码 0</li><li>关</li>
        </ul>
        <div class="scroll">
          <button><svg viewBox="0 0 10 10"><path d="M6.500 1.500L3 5l3.500 3.500" fill="none" stroke="#4d6185" stroke-width="2"/></svg></button>
          <div class="track"><div class="thumb"></div></div>
          <button><svg viewBox="0 0 10 10"><path d="M3.500 1.500L7 5 3.500 8.500" fill="none" stroke="#4d6185" stroke-width="2"/></svg></button>
        </div>
      </div>
    </div>
  </section>

  <section class="view">
    <svg class="scene" viewBox="0 0 1196 704" preserveAspectRatio="xMidYMid slice">
      <g class="axes">
        <path d="M545 162V704M0 195L545 162M427 0L545 162"/>
        <path class="thick" d="M545 0V162L1196 122M545 162L943 704"/>
      </g>
      <g class="wire">
        <path d="M228 77L752 45M228 102L752 70M228 154L752 122M228 77V154M752 45V122"/>
        <path d="M339 228L862 195M339 254L862 222M339 305L862 273M339 228V305M862 195V273"/>
        <path d="M228 77L339 228M228 102L339 254M228 154L339 305M752 45L862 195M752 70L862 222M752 122L862 273"/>
        <path d="M228 77L862 195M228 154L752 45M228 77L339 305M752 122L862 195M339 305L752 122M339 228L862 273"/>
      </g>
    </svg>
    <svg class="gizmo" viewBox="0 0 50 50">
      <path d="M10 14V33" stroke="#0000e0"/><path d="M10 33.500L29 32" stroke="#108048"/>
      <text x="7" y="10" fill="#0000d8">Z</text><text x="36" y="35" fill="#108048">Y</text><text x="12" y="46" fill="#e01838">X</text>
    </svg>
    <div class="labels"><span>视角:不保存</span><span>WCS:俯视图</span><span>刀具/绘图面:俯视图</span></div>
    <div class="ruler"><b>17.916</b><i></i><span>公制</span></div>
  </section>

  <aside class="right">
    <div class="strip">
      <button class="tool"><svg><use href="#r1"/></svg></button>
      <button class="tool"><svg><use href="#globe"/></svg></button>
      <button class="tool"><svg><use href="#r3"/></svg></button>
      <button class="tool"><svg><use href="#open"/></svg></button>
      <button class="tool"><svg><use href="#r5"/></svg></button>
      <button class="tool"><svg><use href="#move"/></svg></button>
      <button class="tool"><svg><use href="#cubet"/></svg></button>
      <button class="tool"><svg><use href="#logo"/></svg></button>
      <button class="tool"><svg><use href="#pencil"/></svg></button>
      <button class="tool"><svg><use href="#undo"/></svg></button>
      <hr class="tall">
      <button class="tool"><svg><use href="#gdim"/></svg></button>
      <button class="tool"><svg><use href="#gpaw"/></svg></button>
      <button class="tool"><svg><use href="#gplus"/></svg></button>
      <button class="tool"><svg><use href="#gline"/></svg></button>
      <button class="tool"><svg><use href="#gcirc"/></svg></button>
      <button class="tool"><svg><use href="#gstep"/></svg></button>
      <button class="tool"><svg><use href="#gsq"/></svg></button>
      <button class="tool"><svg><use href="#ghex"/></svg></button>
      <button class="tool"><svg><use href="#gglobe"/></svg></button>
      <button class="tool"><svg><use href="#gno"/></svg></button>
      <hr>
      <button class="tool"><svg><use href="#gpair"/></svg></button>
      <button class="tool"><svg><use href="#gpair"/></svg></button>
      <button class="tool"><svg><use href="#glist"/></svg></button>
      <hr>
      <button class="tool"><svg><use href="#gtile"/></svg></button>
      <button class="tool"><svg><use href="#gtile2"/></svg></button>
      <hr>
    </div>
  </aside>
</main>

<footer class="status">
  <span class="tip">帮助, 按 Alt+H.</span>
  <button class="xp s3d">3D</button>
  <button class="xp sview">屏幕视角</button>
  <button class="xp splane">平面</button>
  <label for="zdepth">Z</label>
  <span class="combo zbox"><input id="zdepth" value="0.0"></span>
  <div class="set color"><button class="green">10</button><button class="pick"><b class="tri"></b></button></div>
  <label class="lv" for="level">层别</label>
  <span class="combo level"><input id="level" value="1"><svg class="chev"><use href="#chev"/></svg></span>
  <button class="xp attr">属性</button>
  <span class="combo pt"><select aria-label="点型"><option>⚹</option></select><svg class="chev"><use href="#chev"/></svg></span>
  <span class="combo ln"><select aria-label="线宽"><option></option></select><i class="stroke bold"></i><svg class="chev"><use href="#chev"/></svg></span>
  <span class="combo ln"><select aria-label="线型"><option></option></select><i class="stroke"></i><svg class="chev"><use href="#chev"/></svg></span>
  <button class="xp wcs">WCS</button>
  <button class="xp grp">群组</button>
  <button class="xp ex">!</button>
</footer>

<div class="taskbar">
  <button class="start">
    <svg viewBox="0 0 18 18"><path d="M2 3q3-2 6 0L7 8Q4 6 1 8z" fill="#f06030"/><path d="M9 3q4 2 7 0l-1 5q-3 2-7 0z" fill="#80c830"/><path d="M1 10q3-2 6 0l-1 5q-3-2-6 0z" fill="#4090f0"/><path d="M8 10q4 2 7 0l-1 5q-3 2-7 0z" fill="#f8d030"/></svg>开始
  </button>
  <button class="clover"><svg viewBox="0 0 16 16"><path d="M7 7C2 8 0 5 1 3s6-3 6 4z" fill="#70c830"/><path d="M9 7c-1-6 3-7 5-5s2 6-5 5z" fill="#4898f0"/><path d="M7 9c1 6-3 7-5 5S0 8 7 9z" fill="#f8c828"/><path d="M9 9c5-1 7 1 6 4s-6 3-6-4z" fill="#e85848"/></svg></button>
  <div class="quick">
    <button><svg viewBox="0 0 16 16"><path d="M3 1h10l-1 8H4z" fill="#a8d8ff" stroke="#e8f4ff"/><path d="M5 10h6l1 5H4z" fill="#d8e8f8"/></svg></button>
    <button><svg viewBox="0 0 16 16"><path d="M1 4l9-3 5 3-2 10-10 1z" fill="#e8f4ff" stroke="#70a8d8"/><circle cx="8" cy="8" r="4" fill="none" stroke="#2878c8" stroke-width="1.500"/><path d="M8 9l6-7" stroke="#306090" stroke-width="1.500"/></svg></button>
    <button><svg viewBox="0 0 16 16"><circle cx="8" cy="8" r="7.500" fill="#f0d020" stroke="#a88800"/><path d="M8 4v8M4 8h8" stroke="#288028" stroke-width="2.600"/></svg></button>
    <span>»</span>
  </div>
  <div class="tasks">
    <button class="task on"><svg><use href="#logo"/></svg>Mastercam 铣削 X6</button>
    <button class="task"><svg viewBox="0 0 16 16"><circle cx="8" cy="8" r="7.500" fill="#58b838"/><path d="M3 8h9.500c0-6-9-6-9 0s7 5 9 2" fill="none" stroke="#fff" stroke-width="2"/></svg>参与/回复主题 - ...</button>
    <button class="task"><svg viewBox="0 0 16 16"><path d="M1 14V3h5l1 2h7v9z" fill="#e8b830" stroke="#906810"/><path d="M1 14l2-7h12l-1 7z" fill="#ffe888" stroke="#906810"/></svg>D:\我的文档</button>
    <button class="task"><svg viewBox="0 0 16 16"><circle cx="8" cy="8" r="7.500" fill="#e8f4ff"/><path d="M12 3C7 1 3 5 5 9l3 3c4 0 6-2 5-5-2 2-4 2-5 0z" fill="#2888d8"/></svg>迅雷影音</button>
  </div>
  <span class="lang">CH</span>
  <div class="temp">31℃<br>CPU温度</div>
  <div class="tray">
    <svg viewBox="0 0 160 16"><circle cx="8" cy="7" r="6" fill="#202838"/><circle cx="28" cy="7" r="7" fill="#70c8e8"/><path d="M38 2l12 10M50 2L38 12" stroke="#e8e8e8" stroke-width="2"/><circle cx="62" cy="7" r="6" fill="#586878"/><path d="M80 0l9 6-9 6-9-6z" fill="#70e0c8"/><path d="M92 1h14v10H92z" fill="#2050a8" stroke="#d8e8ff"/><circle cx="118" cy="7" r="5" fill="#b0b8c0"/><circle cx="134" cy="7" r="7" fill="#e8d820"/><path d="M145 3l8-3 7 3v8h-15z" fill="#48a838" stroke="#e8f8e0"/></svg>
    <time>20:08</time>
    <span class="mark">三维网www.3dportal.cn</span>
  </div>
</div>

<!-- STL dialog -->
<form class="dialog">
  <div class="dlg-title"><h2>STL 文件转换</h2><button type="button" class="x"><svg viewBox="0 0 20 20"><path d="M5 5l10 10M15 5L5 15" stroke="#fff" stroke-width="2"/></svg></button></div>
  <div class="dlg-body">
    <div class="stack">
      <button type="button" class="focus">重新选取(<u>E</u>)...</button>
      <div class="field"><label for="tri">三角形数</label><input id="tri" value="5000"></div>
      <button type="button">镜像(<u>M</u>)</button>
      <button type="button">比例(<u>S</u>)</button>
      <button type="button">不等比例(<u>A</u>)</button>
      <button type="button">旋转(<u>R</u>)</button>
      <button type="button">平移(<u>T</u>)</button>
      <button type="button">原始的</button>
    </div>
    <div class="bbox"><input type="checkbox" aria-label="边界盒"><button type="button" disabled>边界盒选项(<u>B</u>)</button></div>
    <div class="answer">
      <button type="button"><svg viewBox="0 0 18 18"><path d="M1 10l3-2 3 4L15 0l2 1L8 17H6z" fill="#40b820" stroke="#186808" stroke-width=".8"/></svg></button>
      <button type="button"><svg viewBox="0 0 18 18"><path d="M1 3l3-3 5 5 5-5 3 3-4 6 4 5-3 4-5-5-5 5-3-4 4-5z" fill="#e84010" stroke="#902000" stroke-width=".8"/></svg></button>
      <button type="button"><svg><use href="#help"/></svg></button>
    </div>
  </div>
</form>

<!-- floating widgets of the desktop -->
<svg class="bird" viewBox="0 0 62 60">
  <circle cx="29" cy="31" r="28" fill="#e4f4ff" stroke="#7098b8" stroke-width="1.500"/>
  <path d="M12 20c3-5 9-4 11 0l5 4C32 12 44 7 55 0c1 14-3 22-10 29 5 1 10 2 16 3-6 3-12 5-19 5l-2 19c-3-7-8-11-13-13-9-4-15-12-15-23z" fill="#1878c4"/>
  <path d="M28 25C34 13 46 8 54 1c-4 11-10 20-22 25z" fill="#48a4e4"/>
  <path d="M27 33l12 4 1 18c-4-6-9-9-13-13z" fill="#083c70"/>
  <path d="M12 27c6 0 12 8 13 17-7-3-12-9-13-17z" fill="#dce8f4"/>
  <path d="M13 39c4 8 14 5 21 14-7-2-18-3-21-14z" fill="#e8c838"/>
  <path d="M0 19l12 0v3z" fill="#d8a858"/><circle cx="16" cy="21" r="1.500" fill="#062850"/>
</svg>
<div class="ball65">65</div>

<script>
  // the depth field starts with its value selected
  document.getElementById("zdepth").focus();
  document.getElementById("zdepth").select();
</script>
</body>
</html>
```

FILE: styles.css
```css
* {
  box-sizing: border-box;
}

body {
  margin: 0;
  height: 100vh;
  display: flex;
  flex-direction: column;
  overflow: hidden;
  position: relative;
  background: #ece9d8;
  color: #000;
  font-family: "Liberation Mono", "Noto Sans CJK SC", monospace;
  font-size: 12px;
  line-height: 16px;
}

button, input, select {
  font: inherit;
  color: inherit;
  margin: 0;
  padding: 0;
}

button {
  background: none;
  border: 0;
  white-space: nowrap;
}

h1, h2, p, ul {
  margin: 0;
  padding: 0;
}

::selection {
  background: #316ac5;
  color: #fff;
}

.sheet {
  position: absolute;
}

/* title + menu */
.titlebar {
  flex: none;
  height: 26px;
  display: flex;
  align-items: center;
  padding: 0 2px;
  background: linear-gradient(#9cb8ee 0, #7a96df 20%, #7b9be2 50%, #84a8ec 85%, #7690d4 100%);
}

.titlebar .icon {
  width: 16px;
  height: 16px;
  margin-right: 4px;
}

.titlebar h1 {
  flex: 1;
  font-size: 13px;
  color: #dfe6f8;
}

.winbtns {
  display: flex;
  gap: 3px;
}

.winbtns button {
  width: 20px;
  height: 20px;
  border: 1px solid #d4def6;
  border-radius: 3px;
  background: linear-gradient(135deg, #7f9ff0, #3c5cd0);
}

.winbtns .close {
  background: linear-gradient(135deg, #d09aa8, #a85468);
}

.winbtns svg {
  display: block;
}

.menu {
  flex: none;
  height: 20px;
  display: flex;
  align-items: center;
  border-bottom: 1px solid #aca899;
}

.menu a {
  display: flex;
  align-items: center;
  gap: 5px;
  padding: 0 6px;
  color: #aca899;
  text-decoration: none;
}

.menu u {
  font-size: 12px;
}

/* toolbars */
.row {
  flex: none;
  height: 31px;
  display: flex;
  border-top: 1px solid #fff;
  border-bottom: 1px solid #aca899;
}

.bar {
  display: flex;
  align-items: center;
  padding: 0 3px 0 11px;
  border-right: 1px solid #9d9a8c;
  box-shadow: inset 1px 0 #fff;
}

.bar.apart {
  margin-left: 6px;
  border-left: 1px solid #9d9a8c;
  padding-left: 10px;
}

.bar.far {
  margin-left: 9px;
}

.tool {
  width: 23px;
  height: 22px;
  display: flex;
  align-items: center;
  justify-content: center;
}

.tool svg, .flat svg {
  width: 16px;
  height: 16px;
}

.flat .big {
  width: 20px;
  height: 20px;
}

.drop {
  width: 13px;
  height: 22px;
  display: flex;
  align-items: center;
  justify-content: center;
}

.drop::after, .tri {
  content: "";
  border: 3px solid transparent;
  border-top-color: #000;
  border-bottom: 0;
}

.drop.off::after {
  border-top-color: #aca899;
}

.sep {
  width: 8px;
  height: 20px;
  display: flex;
  justify-content: center;
}

.sep::after {
  content: "";
  width: 1px;
  background: #c5c2b0;
}

.select-bar, .coord-bar {
  display: flex;
  align-items: center;
  gap: 8px;
  background: #ffffcc;
  border-right: 1px solid #9d9a8c;
}

.select-bar {
  padding: 0 9px 0 7px;
}

.grip {
  width: 2px;
  height: 24px;
  border-right: 1px solid #aca899;
}

.set {
  display: flex;
  gap: 2px;
}

.xp {
  display: flex;
  align-items: center;
  justify-content: center;
  height: 22px;
  border: 1px solid #c9c7ba;
  border-radius: 3px;
  background: #f4f3ec;
}

.xp:disabled {
  color: #aca899;
}

.wide {
  width: 46px;
}

.wide.on {
  border-color: #8a8878;
}

.flat {
  width: 22px;
  height: 22px;
  display: flex;
  align-items: center;
  justify-content: center;
  background: #ece9d8;
  color: #aca899;
}

.flat.edge {
  border: 1px solid #c9c7ba;
}

.flat.lasso {
  width: 38px;
}

.combo {
  position: relative;
  height: 20px;
  display: flex;
  border: 1px solid #c9c7ba;
  background: #fff;
}

.combo input, .combo select {
  width: 100%;
  border: 0;
  padding: 0 0 0 3px;
  margin-right: 17px;
  background: none;
  appearance: none;
  outline: 0;
}

.chev {
  position: absolute;
  right: 1px;
  top: 1px;
  bottom: 1px;
  width: 15px;
  height: calc(100% - 2px);
  padding: 2px;
  border-radius: 2px;
  background: linear-gradient(#d8e4fc, #b6cbf8);
  color: #4d6185;
}

.chev.dim {
  background: #f0efe6;
  border: 1px solid #e0ded0;
  color: #c0beb0;
}

.mode {
  width: 72px;
  background: #ece9d8;
}

.coord-bar {
  width: 448px;
  padding-left: 5px;
  gap: 6px;
}

.axis {
  width: 21px;
  font-family: "Liberation Sans", sans-serif;
  font-size: 13px;
}

.num {
  width: 72px;
  margin-right: 6px;
  background: #ece9d8;
  font-family: "Liberation Sans", sans-serif;
  font-size: 11px;
}

.coord-bar .drop {
  width: 11px;
}

.qhelp {
  width: 22px;
  border-color: #405068;
}

.qhelp svg {
  width: 18px;
  height: 18px;
}

.notice {
  margin-left: 188px;
  line-height: 29px;
  font-family: "Liberation Sans", "Noto Sans CJK SC", sans-serif;
}

/* work area */
.work {
  flex: 1;
  min-height: 0;
  display: flex;
}

.left {
  flex: none;
  width: 42px;
  background: #eeeee8;
}

.strip {
  display: flex;
  flex-direction: column;
  background: #ece9d8;
  border-bottom: 1px solid #aca899;
}

.left .strip {
  padding: 11px 0 3px 3px;
}

.left .strip div {
  display: flex;
}

.left .drop {
  margin-left: -1px;
}

.strip hr {
  width: 32px;
  height: 1px;
  margin: 3px 2px 4px;
  border: 0;
  background: #aca899;
}

.right {
  flex: none;
  width: 31px;
  border-left: 2px solid #fff;
  background: #f2f1ea;
}

.right .strip {
  padding: 11px 0 7px 2px;
}

.right .strip hr {
  width: 20px;
}

.right .strip hr.tall {
  width: 26px;
  margin: 3px 0 10px;
}

.panel {
  flex: none;
  width: 331px;
  display: flex;
  flex-direction: column;
  border-right: 2px solid #7c7a70;
}

.panel-head {
  height: 19px;
  display: flex;
  align-items: center;
  gap: 6px;
  padding: 0 5px 0 5px;
  background: #d4d0c8;
}

.panel-head h2 {
  flex: 1;
  font-size: 11px;
  font-weight: normal;
}

.mini {
  width: 15px;
  height: 15px;
  display: flex;
  align-items: center;
  justify-content: center;
  border: 1px solid #34506c;
  border-radius: 2px;
  background: #fff;
  font-size: 10px;
}

.tabs {
  height: 20px;
  display: flex;
  align-items: flex-end;
}

.tab {
  height: 18px;
  padding: 0 6px;
  border: 1px solid #919b9c;
  border-bottom: 0;
  border-radius: 3px 3px 0 0;
  background: #f8f7f2;
}

.tab.active {
  height: 20px;
  border-top: 2px solid #e68b2c;
}

.page {
  flex: 1;
  min-height: 0;
  display: flex;
  flex-direction: column;
  margin-right: 1px;
  padding: 3px 3px 4px 4px;
  border: 1px solid #aca899;
  border-right-color: #fff;
}

.ptools {
  width: 277px;
  height: 67px;
  flex: none;
}

.pline {
  height: 31px;
  display: flex;
  align-items: center;
  padding: 0 0 3px 176px;
  border-top: 1px solid #aca899;
}

.pline .sep {
  width: 6px;
}

.tree {
  flex: 1;
  min-height: 0;
  display: flex;
  flex-direction: column;
  justify-content: space-between;
  border: 1px solid #7f9db9;
  background: #fff;
}

.tree ul {
  padding: 2px 1px;
  list-style: none;
  font-size: 11px;
}

.tree li {
  height: 16px;
  padding-left: 169px;
  overflow: hidden;
  white-space: nowrap;
}

.tree .sel {
  padding-left: 170px;
  background: #316ac5;
  color: #fff;
}

.scroll {
  height: 17px;
  display: flex;
  background: #f6f5ef;
}

.scroll button {
  width: 17px;
  border: 1px solid #fff;
  border-radius: 3px;
  background: #c6d6fc;
}

.scroll button svg {
  display: block;
  width: 11px;
  height: 11px;
  margin: 0 auto;
}

.track {
  flex: 1;
  padding-left: 11px;
}

.thumb {
  width: 71%;
  height: 16px;
  border: 1px solid #98b0e8;
  border-radius: 2px;
  background: repeating-linear-gradient(90deg, #eef4ff 0 1px, #8cb0f8 1px 2px) center / 8px 6px no-repeat, linear-gradient(#cddbff, #b9cbf9);
}

.view {
  flex: 1;
  min-width: 0;
  position: relative;
  background: #000099;
  border-top: 1px solid #000;
}

.scene {
  position: absolute;
  inset: 0;
  width: 100%;
  height: 100%;
}

.wire path {
  fill: none;
  stroke: #4ccf5c;
  shape-rendering: crispEdges;
}

.axes path {
  fill: none;
  stroke: #7a3c5c;
}

.axes .thick {
  stroke: #8c4a3c;
  stroke-width: 2;
}

.gizmo {
  position: absolute;
  left: 32px;
  bottom: 24px;
  width: 50px;
  height: 50px;
  font-size: 10px;
  font-weight: bold;
}

.labels {
  position: absolute;
  left: 8px;
  bottom: 6px;
  display: flex;
  gap: 25px;
  color: #c4c4ec;
  font-weight: bold;
}

.ruler {
  position: absolute;
  right: 24px;
  bottom: 6px;
  width: 97px;
  display: flex;
  flex-direction: column;
  color: #c4c4ec;
  font-weight: bold;
  line-height: 16px;
}

.ruler b {
  padding-left: 36px;
  color: #30d860;
}

.ruler i {
  height: 25px;
  margin: -12px 0 -12px;
  border: solid #e0e0ff;
  border-width: 0 1px;
  background: linear-gradient(#e0e0ff, #e0e0ff) center / 100% 1px no-repeat;
}

.ruler span {
  padding-left: 24px;
}

/* status bar */
.status {
  flex: none;
  height: 27px;
  display: flex;
  align-items: center;
  gap: 6px;
  padding: 2px 22px 0 2px;
  border-top: 2px solid #fff;
  font-size: 11px;
}

.tip {
  flex: 1;
}

.status .xp {
  height: 20px;
}

.s3d { width: 26px; }
.sview { width: 74px; font-size: 12px; }
.splane { width: 27px; font-size: 12px; }
.attr { width: 38px; font-size: 12px; }
.wcs { width: 44px; }
.grp { width: 50px; font-size: 12px; }
.ex { width: 20px; }

.status label {
  min-width: 11px;
}

.status .lv {
  min-width: 29px;
  font-size: 12px;
}

.status .combo {
  height: 21px;
  border-color: #7f9db9;
}

.status .zbox {
  width: 111px;
  background: #ffff80;
}

.zbox::after {
  content: "";
  position: absolute;
  right: 1px;
  top: 1px;
  bottom: 1px;
  width: 15px;
  border-radius: 2px;
  background: linear-gradient(#d8e4fc, #b6cbf8);
}

.zbox::before {
  content: "";
  position: absolute;
  z-index: 1;
  right: 6px;
  top: 5px;
  width: 6px;
  height: 6px;
  border: solid #4d6185;
  border-width: 0 2px 2px 0;
  transform: rotate(45deg);
}

.color {
  gap: 1px;
}

.green {
  width: 52px;
  height: 19px;
  background: #00ff00;
  color: #106010;
}

.pick {
  width: 14px;
  display: flex;
  align-items: center;
  justify-content: center;
}

.pick .tri {
  border-width: 8px 5px 0;
}

.level { width: 160px; }
.pt { width: 34px; margin-left: -2px; }
.ln { width: 64px; margin-left: -2px; }

.stroke {
  position: absolute;
  left: 3px;
  top: 9px;
  width: 41px;
  height: 1px;
  background: #000;
}

.stroke.bold {
  height: 3px;
}

/* taskbar */
.taskbar {
  flex: none;
  height: 30px;
  display: flex;
  align-items: center;
  color: #fff;
  background: linear-gradient(#4a90f4 0, #245edb 12%, #2560dc 80%, #1941a5 100%);
}

.start {
  width: 96px;
  height: 30px;
  display: flex;
  align-items: center;
  padding-left: 10px;
  gap: 6px;
  border-radius: 0 10px 12px 0;
  background: linear-gradient(#6cb868 0, #3c9a3c 15%, #359035 80%, #256c28 100%);
  font-size: 18px;
  font-style: italic;
}

.start svg {
  width: 19px;
  height: 19px;
}

.clover {
  width: 42px;
  height: 26px;
  margin-left: 4px;
  border: 1px solid #4c86ee;
}

.clover svg {
  width: 17px;
  height: 17px;
  vertical-align: middle;
}

.quick {
  width: 95px;
  display: flex;
  align-items: center;
  gap: 7px;
  padding-left: 6px;
}

.quick svg {
  display: block;
  width: 16px;
  height: 16px;
}

.quick span {
  padding-bottom: 8px;
}

.tasks {
  flex: 1;
  display: flex;
  gap: 2px;
}

.task {
  width: 158px;
  height: 25px;
  display: flex;
  align-items: center;
  gap: 4px;
  padding-left: 10px;
  border-radius: 3px;
  background: #3c81f3;
  box-shadow: inset 1px 1px #5c9af8;
}

.task.on {
  background: #1e52b7;
  box-shadow: inset 1px 1px #163f90;
  font-size: 11px;
}

.task svg {
  width: 16px;
  height: 16px;
}

.lang {
  margin-right: 22px;
  font-size: 11px;
}

.temp {
  width: 42px;
  margin-right: 31px;
  text-align: center;
  font-size: 11px;
  line-height: 12px;
  white-space: nowrap;
}

.tray {
  position: relative;
  width: 221px;
  height: 30px;
  padding: 5px 14px;
  background: linear-gradient(#3cb4f8 0, #1290e8 15%, #1290e8 85%, #0c68b8 100%);
  border-left: 1px solid #0c4c98;
}

.tray svg {
  display: block;
  width: 160px;
  height: 16px;
}

.tray time {
  position: absolute;
  right: 13px;
  top: 7px;
  font-size: 11px;
}

.mark {
  position: absolute;
  left: 0;
  top: 7px;
  font-family: "DejaVu Sans", "Noto Sans CJK SC", sans-serif;
  font-size: 17px;
  line-height: 20px;
  white-space: nowrap;
  color: #e81818;
  -webkit-text-stroke: 2px #fff;
  paint-order: stroke fill;
}

/* dialog */
.dialog {
  position: absolute;
  left: 40px;
  top: 168px;
  width: 177px;
  border: 3px solid #0c3cc8;
  border-top: 0;
  border-radius: 7px 7px 0 0;
  background: #ece9d8;
}

.dlg-title {
  height: 29px;
  display: flex;
  align-items: center;
  margin: 0 -3px;
  padding: 0 5px 0 7px;
  border-radius: 7px 7px 0 0;
  background: linear-gradient(#0a58e0 0, #3c90ff 8%, #0458e8 25%, #0458e8 60%, #0464fc 85%, #0040c0 100%);
}

.dlg-title h2 {
  flex: 1;
  color: #fff;
  font-size: 13px;
}

.x {
  width: 21px;
  height: 21px;
  border: 1px solid #fff;
  border-radius: 3px;
  background: linear-gradient(135deg, #f09878, #c83c18);
}

.x svg {
  display: block;
}

.stack {
  width: 134px;
  padding: 27px 0 15px 31px;
  display: flex;
  flex-direction: column;
  gap: 12px;
}

.dlg-body button {
  height: 20px;
  width: 103px;
  display: flex;
  align-items: center;
  justify-content: center;
  border: 1px solid #003c74;
  border-radius: 3px;
  background: linear-gradient(#fff, #ecebe4 85%, #d8d0c4);
}

.dlg-body .focus {
  outline: 1px dotted #000;
  outline-offset: -4px;
  box-shadow: inset 0 0 0 2px #a8c4f0;
}

.dlg-body button u {
  font-size: 11px;
}

.field {
  height: 20px;
  display: flex;
  justify-content: space-between;
  margin-left: -2px;
}

.field label {
  line-height: 20px;
}

.field input {
  width: 50px;
  height: 19px;
  padding: 0 2px;
  align-self: flex-end;
  border: 1px solid #7f9db9;
  background: #fff;
  font-family: "Liberation Sans", sans-serif;
  font-size: 11px;
}

.bbox {
  display: flex;
  align-items: center;
  gap: 12px;
  padding-left: 17px;
}

.bbox input {
  appearance: none;
  width: 13px;
  height: 13px;
  border: 1px solid #1c5180;
  background: linear-gradient(135deg, #dcdcd7, #fff);
}

.bbox button:disabled {
  border-color: #c9c7ba;
  background: #f5f4ea;
  color: #aca899;
}

.answer {
  display: flex;
  gap: 5px;
  padding: 16px 2px 10px 3px;
}

.dlg-body .answer button {
  flex: 1;
  height: 25px;
}

.answer svg {
  width: 19px;
  height: 19px;
}

/* desktop widgets */
.bird {
  position: absolute;
  right: 109px;
  top: 10px;
  width: 62px;
  height: 60px;
}

.ball65 {
  position: absolute;
  right: -35px;
  bottom: 24px;
  width: 54px;
  height: 54px;
  padding-left: 3px;
  border: 3px solid #e0dcd8;
  border-radius: 50%;
  background: #f58430;
  color: #fff;
  font-family: "Liberation Sans", sans-serif;
  font-weight: bold;
  line-height: 46px;
}
```
